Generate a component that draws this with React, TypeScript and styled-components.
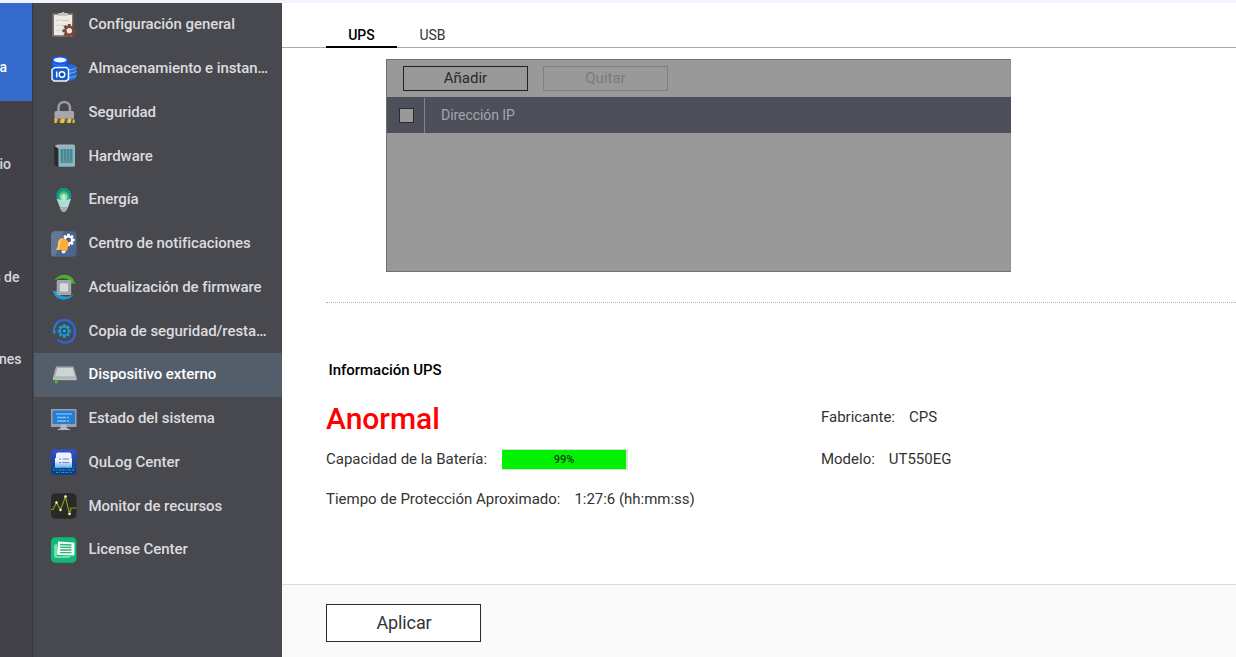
import React from "react";
import styled, { createGlobalStyle } from "styled-components";

const GlobalStyle = createGlobalStyle`
  * { box-sizing: border-box; }
  body { margin: 0; overflow: hidden; background: #fff; font-family: Roboto, "Liberation Sans", sans-serif; }
  button { font-family: inherit; padding: 0; border-radius: 0; }
`;

const Page = styled.div`
  width: 1236px;
  height: 657px;
  display: flex;
  flex-direction: column;
  overflow: hidden;
`;
const TopStrip = styled.div`
  flex: 0 0 3px;
  background: #f1f3fe;
`;
const Body = styled.div`
  flex: 1;
  min-height: 0;
  display: flex;
`;

const Rail = styled.nav`
  flex: 0 0 34px;
  border-right: 1px solid #44444b;
  background: linear-gradient(90deg, #424149 32px, #393941 32px);
  display: flex;
  flex-direction: column;
  overflow: hidden;
`;
const RailItem = styled.div<{ $h: number; $end: number; $pad: number; $active?: boolean }>`
  flex: 0 0 ${(p) => p.$h}px;
  width: 32px;
  padding: ${(p) => p.$pad}px ${(p) => 32 - p.$end}px 0 0;
  display: flex;
  justify-content: flex-end;
  overflow: hidden;
  white-space: nowrap;
  font-size: 14px;
  font-weight: 500;
  line-height: 20px;
  color: ${(p) => (p.$active ? "#fff" : "#d6d6d9")};
  background: ${(p) => (p.$active ? "#346bcb" : "transparent")};
`;

const Sidebar = styled.nav`
  flex: 0 0 248px;
  background: #48484f;
`;
const Item = styled.div<{ $active?: boolean }>`
  height: 43.76px;
  padding-left: 17px;
  display: flex;
  align-items: center;
  gap: 11.5px;
  background: ${(p) => (p.$active ? "#545d6a" : "transparent")};
  color: ${(p) => (p.$active ? "#fff" : "#dcdcdf")};
  svg { flex: none; }
`;
const ItemLabel = styled.span`
  font-size: 15px;
  font-weight: 500;
  line-height: 20px;
  letter-spacing: -0.07px;
  white-space: nowrap;
  margin-top: -1px;
`;

const Main = styled.main`
  flex: 1;
  min-width: 0;
  display: flex;
  flex-direction: column;
`;
const Tabs = styled.div`
  height: 45px;
  padding-left: 44px;
  display: flex;
  box-shadow: inset 0 -1px 0 #a9a9a9;
`;
const Tab = styled.div<{ $active?: boolean }>`
  width: 71px;
  padding-top: 22px;
  text-align: center;
  font-size: 14px;
  line-height: 20px;
  font-weight: ${(p) => (p.$active ? 500 : 400)};
  color: ${(p) => (p.$active ? "#000" : "#333")};
  border-bottom: ${(p) => (p.$active ? "2px solid #000" : "0")};
`;
const Content = styled.section`
  height: 536px;
  padding: 11px 0 0 44px;
`;
const IpPanel = styled.div`
  width: 625px;
  height: 213px;
  margin-left: 60px;
  border: 1px solid #707070;
  border-right-color: #909090;
  background: #999;
`;
const Toolbar = styled.div`
  height: 37px;
  padding: 6px 16px 0;
  display: flex;
  gap: 15px;
`;
const SmallButton = styled.button`
  width: 125px;
  height: 25px;
  padding-bottom: 2px;
  border: 1px solid #222;
  background: transparent;
  color: #2a2a2a;
  font-size: 15px;
  line-height: 20px;
  &:disabled { border-color: #808080; color: #7b7b7b; }
`;
const TableHead = styled.div`
  height: 36px;
  margin-right: -1px;
  display: flex;
  align-items: center;
  background: #4d505b;
`;
const CheckCell = styled.div`
  width: 38px;
  height: 35px;
  padding-left: 12px;
  display: flex;
  align-items: center;
  border-right: 1px solid #81848a;
`;
const CheckBox = styled.div`
  width: 15px;
  height: 15px;
  margin-top: 1px;
  border: 1px solid #292b30;
  background: #999;
`;
const HeadLabel = styled.span`
  padding-left: 16px;
  font-size: 14px;
  letter-spacing: -0.06px;
  color: #a4a5a9;
`;
const Separator = styled.div`
  margin-top: 30px;
  border-top: 1px dotted #b5b5b5;
`;
const Heading = styled.h2`
  margin: 57px 0 0 2.5px;
  font-size: 15px;
  line-height: 20px;
  font-weight: 500;
  letter-spacing: -0.03px;
  color: #000;
`;
const InfoGrid = styled.div`
  margin-top: 18px;
  display: grid;
  grid-template-columns: 495px 1fr;
  grid-template-rows: 40px 42px 38px;
  align-items: center;
`;
const Status = styled.div`
  padding-top: 1px;
  font-size: 30px;
  line-height: 40px;
  font-weight: 500;
  color: #f00;
`;
const Field = styled.div<{ $lift?: number; $gap?: number }>`
  display: flex;
  align-items: center;
  gap: ${(p) => p.$gap ?? 14}px;
  font-size: 15px;
  line-height: 20px;
  letter-spacing: -0.015px;
  color: #333;
  white-space: nowrap;
  padding-bottom: ${(p) => p.$lift ?? 0}px;
`;
const Battery = styled.div`
  width: 126px;
  height: 21px;
  border: 1px solid #d5dfd5;
  border-left-width: 0;
  border-right-width: 2px;
`;
const Charge = styled.div`
  height: 100%;
  padding-top: 1px;
  background: #00f200;
  display: flex;
  align-items: center;
  justify-content: center;
  font-size: 11px;
  font-weight: 500;
  color: #123812;
`;
const Footer = styled.footer`
  flex: 1;
  padding: 19px 0 0 44px;
  border-top: 1px solid #d9d9d9;
  background: #fafafa;
`;
const ApplyButton = styled.button`
  width: 155px;
  height: 38px;
  padding: 0 0 2px 1px;
  border: 1px solid #2b2b2b;
  background: #fff;
  color: #333;
  font-size: 18px;
  letter-spacing: -0.1px;
`;

const Icon = ({ children }: { children: React.ReactNode }) => (
  <svg width="26" height="26" viewBox="0 0 26 26" fill="none">{children}</svg>
);
const Gear = ({ x, y, r, color, hole, inner = 0.4 }: { x: number; y: number; r: number; color: string; hole: string; inner?: number }) => (
  <g transform={`translate(${x} ${y})`}>
    {[0, 45, 90, 135].map((a) => (
      <rect key={a} x={-r * 0.22} y={-r} width={r * 0.44} height={r * 2} fill={color} transform={`rotate(${a})`} />
    ))}
    <circle r={r * 0.74} fill={color} />
    <circle r={r * inner} fill={hole} />
  </g>
);

const icons: Record<string, React.ReactNode> = {
  general: (
    <Icon>
      <rect x="1.300" y="1.300" width="21" height="23.500" rx="1" fill="#8b6f69" />
      <rect x="3" y="2.800" width="18" height="20.400" fill="#ece9e7" />
      <path d="M7.500 1h3a1.700 1.700 0 0 1 3.200 0h3v3h-9.200z" fill="#bccac6" />
      <path d="m5.500 8 1 1 2-2m-3 6 1 1 2-2m-3 6 1 1 2-2M10 8.500h8m-8 5h7m-7 5h3" stroke="#c9c4c4" strokeWidth="1" />
      <Gear x={18.300} y={18.800} r={6.800} color="#76463b" hole="#f0e4de" />
    </Icon>
  ),
  storage: (
    <Icon>
      <path d="M14 10.500 18 8q5 0 7.500 3v10c0 3-6 4-10 4z" fill="#2768dc" />
      <path d="M16 13.500c4 1 7.500 0 9.500-2M16 17.500c4 0 7.500-1 9.500-2.500M18 21.500c3.500 0 6-.8 7.500-2" stroke="#79b4f6" strokeWidth="1" />
      <path d="M1.500.5h14l1 3q0 3 2 5l-3 4H1z" fill="#1457e8" />
      <ellipse cx="9" cy="4" rx="6.500" ry="2.500" fill="#e3f4ff" />
      <path d="M2 7.500c3 2 8 2.500 12 .5" stroke="#3b82ff" />
      <path d="M1 13.500 4 11.500h11.500l2 2V23l-2 2H3l-2-2z" fill="#145ecb" stroke="#f1f8ff" strokeWidth="1.500" />
      <path d="M5.700 15.500v6" stroke="#fff" strokeWidth="1.500" />
      <circle cx="11" cy="18.500" r="2.700" fill="#0c4493" stroke="#fff" strokeWidth="1.500" />
    </Icon>
  ),
  security: (
    <Icon>
      <path d="M7.500 13V9c0-8 11.500-8 11.500 0v4" stroke="#9b9ca1" strokeWidth="2.500" />
      <path d="M3.500 13.500Q3.500 12 5 12h16.500q1.500 0 1.500 1.500V20H3.500z" fill="#a6a7ad" />
      <path d="M3.500 19.500H23V23.500H3.500z" fill="#65615b" />
      <path d="M3.500 19.500h3l-1 4.500H3.500zm6.500 0h4L13 24H9zm7 0h3.500l-1 4.500H16z" fill="#f3c33b" />
      <path d="M22 20.500h1.500V24H21.500z" fill="#f3c33b" />
    </Icon>
  ),
  hardware: (
    <Icon>
      <path d="M3 3.500 8 2v22l-4.500-1.500z" fill="#292c31" />
      <path d="m3.500 3 3-1.500h16l1.500 1V6H8z" fill="#a9b3b6" />
      <path d="M7.500 5.500Q7.500 3 10 3h12q2 0 2 2v17.500q0 1.200-1.500 1.200H7.500z" fill="#85b7c7" />
      <path d="M9.500 6h12v14h-12z" fill="#4a8792" />
      <path d="M12.500 6v13m3-13v13m3-13v13" stroke="#699ea7" />
      <path d="M10 19h12" stroke="#8a9d6c" strokeDasharray="1.500 1.500" />
    </Icon>
  ),
  power: (
    <Icon>
      <circle cx="12.800" cy="8.500" r="7.700" fill="#168f7d" />
      <circle cx="12.800" cy="9.500" r="5.400" fill="#35b99a" />
      <circle cx="12.800" cy="10" r="3.500" fill="#9cdea8" />
      <path d="M5.500 11.500q7.300 3 14.600 0L17 20.500H9z" fill="#abdeda" />
      <path d="M12.800 8v6" stroke="#d1f0b1" strokeWidth="2" />
      <path d="M9 20h7.500v2l-2.500 3h-2.500L9 22z" fill="#aaabad" />
    </Icon>
  ),
  notifications: (
    <Icon>
      <rect width="25.500" height="25.500" y=".3" rx="4" fill="#4d638e" />
      <path d="M0 5Q0 .3 4 .3h9L4 25.800Q0 25.800 0 22z" fill="#667696" />
      <Gear x={17.500} y={9} r={6.200} color="#fff" hole="#465b87" />
      <path d="M8 9q5-3.500 9 1 1.500 2.500 0 5.500l-.5 4L5 18.500q2-2 2-5.500 0-3 1-4z" fill="#ffae34" />
      <path d="M8 9q2-2.500 4-2Q8.500 12 8.500 19H5q2-2 2-5.500 0-3 1-4.500z" fill="#ffc65f" />
      <path d="M10.500 19.500h4.500q-.5 3-2.500 3-2 0-2-3z" fill="#fff5dc" />
    </Icon>
  ),
  firmware: (
    <Icon>
      <path d="M3 7C8-1.500 20-1 23 7l1.500 3-6-1 1-1.500C15 3 8 3.500 3 7z" fill="#51ac2b" />
      <path d="M23 20C18 28 6 27 3 20l-1.500-3.500 6 1-1 2c5 4 11 4 16.500.500z" fill="#2396d2" />
      <rect x="5.700" y="6" width="14.500" height="15" rx="1.500" fill="#a8adb3" />
      <rect x="7.200" y="7.500" width="11.500" height="12" rx="1" stroke="#868c92" strokeDasharray="1.200 1.200" />
      <rect x="9" y="9.500" width="8" height="8" rx="1" fill="#d5dadd" />
    </Icon>
  ),
  backup: (
    <Icon>
      <path d="M6 4.500C12-.5 23.500 2 24 13S15 27 7 22.500" stroke="#2c67cf" strokeWidth="2.500" strokeLinecap="round" />
      <path d="M3 13c0-3 1-6 3.500-8" stroke="#367bdc" strokeWidth="2" />
      <path d="m1 12.500 4.500 .5-2.500 4z" fill="#367bdc" />
      <Gear x={13.300} y={13} r={6.700} color="#159ed4" hole="#3b4859" inner={0.5} />
      <circle cx="13.300" cy="13" r="1.500" fill="#20b8e1" />
    </Icon>
  ),
  external: (
    <Icon>
      <path d="M5 4.500h17.500l3 10.500v3.300H2V15z" fill="#a6acae" />
      <path d="M6.500 6h15L24 14.500H4z" fill="#ced4d5" />
      <path d="M2 15.500h23.500v2.500H2z" fill="#b6bcbe" />
      <path d="M2.500 18.500h5q-3 3.500-4.500 2z" fill="#47852b" />
      <circle cx="5.200" cy="20" r="1.600" fill="#5fb425" />
    </Icon>
  ),
  status: (
    <Icon>
      <path d="M0 3h25.500v18H0z" fill="#98a2a9" />
      <path d="M1.500 4.500h22.500V18H1.500z" fill="#267cd2" />
      <path d="M5 8h16" stroke="#74b9f0" strokeWidth="1.500" />
      <path d="M6 11.500h13M6 15h13" stroke="#83c3f4" strokeWidth="1.500" strokeDasharray="9 1 2 1" />
      <path d="M10 18.500h5l1 3.500 4 2H6l3.500-2z" fill="#b4bbc0" />
    </Icon>
  ),
  qulog: (
    <Icon>
      <defs>
        <linearGradient id="qulogBg" x1="0" y1="0" x2="0" y2="1">
          <stop offset="0" stopColor="#3450d2" />
          <stop offset="1" stopColor="#063c7c" />
        </linearGradient>
        <linearGradient id="qulogPaper" x1="0" y1="0" x2="0" y2="1">
          <stop offset=".5" stopColor="#eef4ff" />
          <stop offset="1" stopColor="#70aee4" />
        </linearGradient>
      </defs>
      <rect width="25.500" height="25.500" y=".3" rx="4" fill="url(#qulogBg)" />
      <path d="M5 5.500q0-2 2-2h11q2.500 0 2.500 2v4h.5V19H4V9h1z" fill="url(#qulogPaper)" />
      <path d="M8 10h2m1.500 0h6.500m-10 3.500h2m1.500 0h6.500" stroke="#6688c7" strokeWidth="1.100" />
      <path d="M3 18.500h20M2 21h21M5 23.500h16" stroke="#17a8d8" strokeWidth="1.200" strokeDasharray="2 1 1 1.500 3 1" />
    </Icon>
  ),
  monitor: (
    <Icon>
      <rect width="25.500" height="25.500" y=".3" rx="4.500" fill="#2b2926" />
      <path d="M0 16.500h2l3.500-7 4 7.500 5-13.500L18.500 21l1.500-6h5.500" stroke="#78a21d" strokeWidth="1.200" />
      <g fill="#efffd6"><circle cx="5.500" cy="9.500" r="1.200" /><circle cx="9.500" cy="17" r="1.200" /><circle cx="14.500" cy="3.500" r="1.300" /><circle cx="18.500" cy="21" r="1.300" /></g>
    </Icon>
  ),
  license: (
    <Icon>
      <rect width="25.500" height="25.500" y=".3" rx="4.500" fill="#11b876" />
      <path d="M3 9q0-2 3-2v12h14q-1 2-3 2H5q-2 0-2-2z" fill="#74ddb0" />
      <path d="m7 4.500 15.500 1q1 0 1 1V17q0 1.500-1.500 1.500L8 18q-2 0-2-1.500z" fill="#f2fff9" />
      <path d="m9 7.500 11.500.5M9 10.200l11.500.3M9 13h11.500M9 15.700h11.500" stroke="#36ad7c" strokeWidth="1.300" />
    </Icon>
  ),
};

const items: [string, string][] = [
  ["general", "Configuración general"],
  ["storage", "Almacenamiento e instan…"],
  ["security", "Seguridad"],
  ["hardware", "Hardware"],
  ["power", "Energía"],
  ["notifications", "Centro de notificaciones"],
  ["firmware", "Actualización de firmware"],
  ["backup", "Copia de seguridad/resta…"],
  ["external", "Dispositivo externo"],
  ["status", "Estado del sistema"],
  ["qulog", "QuLog Center"],
  ["monitor", "Monitor de recursos"],
  ["license", "License Center"],
];

export default function App() {
  return (
    <Page>
      <GlobalStyle />
      <TopStrip />
      <Body>
        <Rail>
          <RailItem $h={98} $end={7} $pad={54} $active>a</RailItem>
          <RailItem $h={98} $end={11} $pad={53}>io</RailItem>
          <RailItem $h={98} $end={19.5} $pad={68}>s de</RailItem>
          <RailItem $h={98} $end={21.5} $pad={52}>nes</RailItem>
        </Rail>
        <Sidebar>
          {items.map(([key, label]) => (
            <Item key={key} $active={key === "external"}>
              {icons[key]}
              <ItemLabel>{label}</ItemLabel>
            </Item>
          ))}
        </Sidebar>
        <Main>
          <Tabs>
            <Tab $active>UPS</Tab>
            <Tab>USB</Tab>
          </Tabs>
          <Content>
            <IpPanel>
              <Toolbar>
                <SmallButton>Añadir</SmallButton>
                <SmallButton disabled>Quitar</SmallButton>
              </Toolbar>
              <TableHead>
                <CheckCell><CheckBox /></CheckCell>
                <HeadLabel>Dirección IP</HeadLabel>
              </TableHead>
            </IpPanel>
            <Separator />
            <Heading>Información UPS</Heading>
            <InfoGrid>
              <Status>Anormal</Status>
              <Field $lift={2}><span>Fabricante:</span><span>CPS</span></Field>
              <Field $gap={15}><span>Capacidad de la Batería:</span><Battery><Charge>99%</Charge></Battery></Field>
              <Field><span>Modelo:</span><span>UT550EG</span></Field>
              <Field $lift={1}><span>Tiempo de Protección Aproximado:</span><span>1:27:6 (hh:mm:ss)</span></Field>
            </InfoGrid>
          </Content>
          <Footer><ApplyButton>Aplicar</ApplyButton></Footer>
        </Main>
      </Body>
    </Page>
  );
}
